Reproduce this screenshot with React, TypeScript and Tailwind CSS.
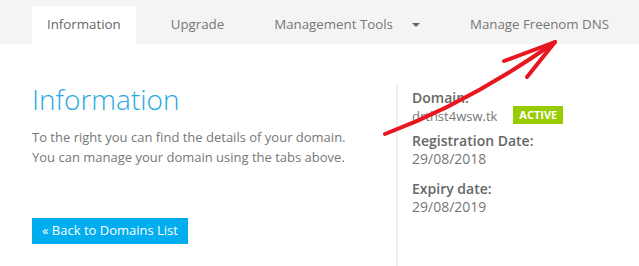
export default function App() {
  return (
    <div className="relative h-[266px] w-[639px] overflow-hidden bg-white font-['Open_Sans',sans-serif]">
      <nav className="flex h-[44px] items-end gap-[20px] bg-[#f4f4f4] pl-[32px] text-[13.3px] text-[#777]">
        <div className="flex h-[38px] items-center rounded-t-[3px] bg-white px-[15px] text-[#666]">
          Information
        </div>
        <div className="flex h-[38px] items-center px-[15px]">Upgrade</div>
        <div className="flex h-[38px] items-center px-[15px]">
          <span>Management Tools</span>
          <span className="ml-[19px] h-0 w-0 border-x-[4px] border-t-[4px] border-x-transparent border-t-[#666]" />
        </div>
        <div className="flex h-[38px] items-center px-[15px]">Manage Freenom DNS</div>
      </nav>

      <div className="flex">
        <section className="w-[396px] shrink-0 pl-[32px]">
          <h1 className="mt-[38px] text-[28px] font-light leading-[34px] text-[#2aa9e0]">Information</h1>
          <p className="mt-[11px] text-[13px] leading-[20px] text-[#777]">
            To the right you can find the details of your domain.
            <br />
            You can manage your domain using the tabs above.
          </p>
          <button className="mt-[51px] h-[26px] bg-[#00adef] px-[10px] text-[13px] text-white">
            « Back to Domains List
          </button>
        </section>

        <aside className="mt-[40px] h-[190px] border-l-[2px] border-[#eee] pl-[14px] text-[14px] leading-[18px] text-[#777]">
          <div className="mt-[5px] font-semibold text-[#666]">Domain:</div>
          <div className="flex h-[18px] items-center">
            <span className="text-[13px]">drthst4wsw.tk</span>
            <span className="ml-[16px] mt-[-2px] bg-[#99cc00] px-[6px] text-[11px] leading-[18px] font-bold text-white">ACTIVE</span>
          </div>
          <div className="mt-[7px] font-semibold text-[#666]">Registration Date:</div>
          <div>29/08/2018</div>
          <div className="mt-[12px] font-semibold text-[#666]">Expiry date:</div>
          <div>29/08/2019</div>
        </aside>
      </div>

      <svg className="pointer-events-none absolute left-0 top-0" width="639" height="266" viewBox="0 0 639 266">
        <g fill="none" stroke="#e8161f" strokeWidth="4" strokeLinecap="round" strokeLinejoin="round">
          <path d="M385 134 Q 470 102 555 42" />
          <path d="M504 61 L555 42 L527 77" />
        </g>
      </svg>
    </div>
  );
}
